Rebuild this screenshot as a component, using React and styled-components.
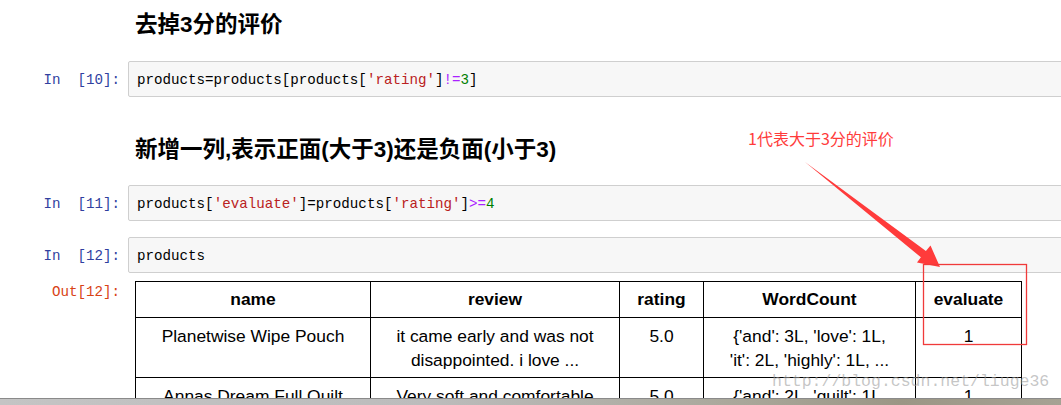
import styled, { createGlobalStyle } from 'styled-components';

const GlobalStyle = createGlobalStyle`
  html, body {
    margin: 0;
    padding: 0;
    background: #fff;
    overflow: hidden;
  }
`;

const Page = styled.div`
  position: relative;
  width: 1061px;
  height: 405px;
  overflow: hidden;
  font-family: 'Liberation Sans', 'Noto Sans CJK SC', sans-serif;
`;

const Row = styled.div`
  display: flex;
  align-items: flex-start;
  margin-top: ${(p) => p.$gap}px;
`;

const Prompt = styled.div`
  flex: 0 0 128px;
  box-sizing: border-box;
  padding-right: 8px;
  padding-top: ${(p) => p.$top || 11}px;
  text-align: right;
  white-space: pre;
  font-family: 'Liberation Mono', monospace;
  font-size: 14.2px;
  line-height: 17px;
  color: ${(p) => (p.$out ? '#d84315' : '#303f9f')};
`;

const Heading = styled.h2`
  margin: 0;
  padding-left: 135px;
  font-family: 'Liberation Sans', 'Noto Sans CJK SC', sans-serif;
  font-weight: bold;
  font-size: 22.5px;
  line-height: 30px;
  color: #000;
`;

const InputArea = styled.div`
  flex: 1;
  box-sizing: border-box;
  height: 36px;
  margin-right: -10px;
  padding: 10px 8px 7px;
  background: #f7f7f7;
  border: 1px solid #cfcfcf;
  border-radius: 2px;
  font-family: 'Liberation Mono', monospace;
  font-size: 14.2px;
  line-height: 17px;
  color: #000;
  white-space: pre;
`;

const Tok = styled.span`
  color: ${(p) =>
    p.$k === 'str' ? '#ba2121' : p.$k === 'op' ? '#aa22ff' : p.$k === 'num' ? '#008000' : '#000'};
`;

const OutputArea = styled.div`
  padding-left: 7px;
`;

const Table = styled.table`
  border-collapse: collapse;
  table-layout: fixed;
  width: 887px;
  font-family: 'Liberation Sans', Arial, sans-serif;
  font-size: 17.4px;
  line-height: 24px;
  color: #000;

  th, td {
    border: 1px solid #000;
    padding: 6px 4px 5px;
    text-align: center;
    vertical-align: top;
    white-space: nowrap;
  }
  th {
    font-weight: bold;
    padding: 5px 4px 6px;
  }
`;

const Line = styled.div`
  white-space: nowrap;
`;

const Watermark = styled.div`
  position: absolute;
  left: 772px;
  top: 372px;
  font-family: 'Liberation Mono', monospace;
  font-size: 16.5px;
  color: rgba(160, 160, 160, 0.6);
  white-space: pre;
`;

const Note = styled.div`
  position: absolute;
  left: 748px;
  top: 128px;
  font-family: 'Noto Sans CJK SC', sans-serif;
  font-size: 16px;
  line-height: 20px;
  color: #ff3b3b;
`;

const Overlay = styled.svg`
  position: absolute;
  left: 0;
  top: 0;
  pointer-events: none;
`;

const Taskbar = styled.div`
  position: absolute;
  left: 0;
  right: 0;
  bottom: 0;
  height: 6px;
  border-top: 1px solid #8a8a8a;
  background: linear-gradient(90deg, #c4c4c4 0%, #bcbcbc 40%, #a9a79a 70%, #9b9685 85%, #a6a294 100%);
`;

const code = (tokens) =>
  tokens.map(([k, t], i) => (
    <Tok key={i} $k={k}>
      {t}
    </Tok>
  ));

const rows = [
  {
    name: ['Planetwise Wipe Pouch'],
    review: ['it came early and was not', 'disappointed. i love ...'],
    rating: ['5.0'],
    wc: ["{'and': 3L, 'love': 1L,", "'it': 2L, 'highly': 1L, ..."],
    ev: ['1'],
  },
  {
    name: ['Annas Dream Full Quilt', 'with 2 Shams'],
    review: ['Very soft and comfortable', 'and warmer than it ...'],
    rating: ['5.0'],
    wc: ["{'and': 2L, 'quilt': 1L,", "'it': 1L, 'comfortable...'"],
    ev: ['1'],
  },
];

const Cell = ({ lines }) => (
  <td>
    {lines.map((l) => (
      <Line key={l}>{l}</Line>
    ))}
  </td>
);

export default function App() {
  return (
    <Page>
      <GlobalStyle />
      <Heading style={{ marginTop: 10 }}>去掉3分的评价</Heading>

      <Row $gap={21}>
        <Prompt>In  [10]:</Prompt>
        <InputArea>
          {code([
            ['', 'products=products[products['],
            ['str', "'rating'"],
            ['', ']'],
            ['op', '!='],
            ['num', '3'],
            ['', ']'],
          ])}
        </InputArea>
      </Row>

      <Heading style={{ marginTop: 38 }}>新增一列,表示正面(大于3)还是负面(小于3)</Heading>

      <Row $gap={20}>
        <Prompt>In  [11]:</Prompt>
        <InputArea>
          {code([
            ['', 'products['],
            ['str', "'evaluate'"],
            ['', ']=products['],
            ['str', "'rating'"],
            ['', ']'],
            ['op', '>='],
            ['num', '4'],
          ])}
        </InputArea>
      </Row>

      <Row $gap={16}>
        <Prompt>In  [12]:</Prompt>
        <InputArea>products</InputArea>
      </Row>

      <Row $gap={8}>
        <Prompt $out $top={3}>
          Out[12]:
        </Prompt>
        <OutputArea>
          <Table>
            <colgroup>
              <col style={{ width: 235 }} />
              <col style={{ width: 249 }} />
              <col style={{ width: 84 }} />
              <col style={{ width: 212 }} />
              <col style={{ width: 106 }} />
            </colgroup>
            <thead>
              <tr>
                <th>name</th>
                <th>review</th>
                <th>rating</th>
                <th>WordCount</th>
                <th>evaluate</th>
              </tr>
            </thead>
            <tbody>
              {rows.map((r) => (
                <tr key={r.name[0]}>
                  <Cell lines={r.name} />
                  <Cell lines={r.review} />
                  <Cell lines={r.rating} />
                  <Cell lines={r.wc} />
                  <Cell lines={r.ev} />
                </tr>
              ))}
            </tbody>
          </Table>
        </OutputArea>
      </Row>

      <Watermark>http://blog.csdn.net/liuge36</Watermark>

      <Note>1代表大于3分的评价</Note>
      <Overlay width="1061" height="405" viewBox="0 0 1061 405">
        <polygon
          points="805,162 925.9,250.9 930.5,245.5 940,267 917,262.6 920.9,257.3"
          fill="#ff3b3b"
        />
        <rect x="923.5" y="264.5" width="103" height="80" fill="none" stroke="#f03a3a" strokeWidth="1.3" />
      </Overlay>

      <Taskbar />
    </Page>
  );
}
